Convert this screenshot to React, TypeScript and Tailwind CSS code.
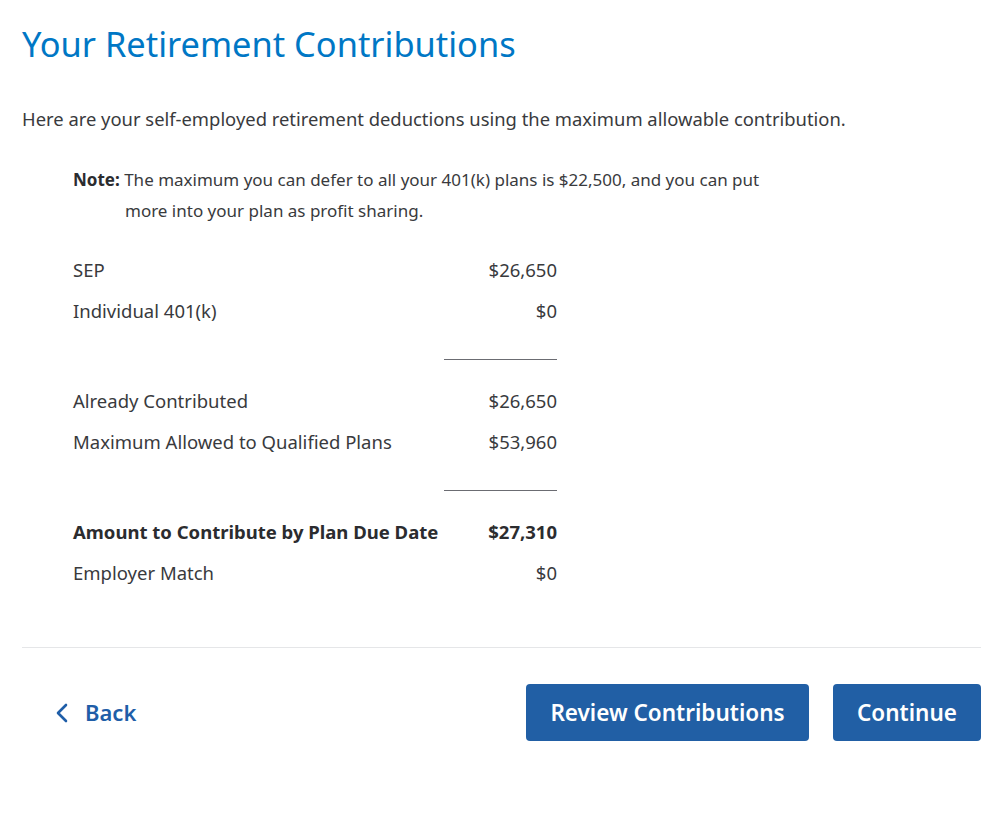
const rows1 = [
  { label: 'SEP', value: '$26,650' },
  { label: 'Individual 401(k)', value: '$0' },
];
const rows2 = [
  { label: 'Already Contributed', value: '$26,650' },
  { label: 'Maximum Allowed to Qualified Plans', value: '$53,960' },
];

function Row({ label, value, bold }: { label: string; value: string; bold?: boolean }) {
  return (
    <div className={`flex h-[41px] items-center justify-between text-[18.5px] ${bold ? 'font-bold text-[#2b2c2f]' : 'text-[#393a3d]'}`}>
      <span>{label}</span>
      <span>{value}</span>
    </div>
  );
}

function Divider() {
  return (
    <div className="mt-[28px] mb-[20px] flex justify-end">
      <div className="h-px w-[113px] bg-[#6b6c72]" />
    </div>
  );
}

export default function App() {
  return (
    <div className="min-h-screen bg-white text-[#393a3d]" style={{ fontFamily: '"Noto Sans", sans-serif' }}>
      <div className="pl-[22px] pr-[18px] pt-[24px]">
        <h1 className="text-[34.4px] leading-[40px] text-[#0077c5]">Your Retirement Contributions</h1>

        <p className="mt-[42px] text-[18.4px] leading-[26px]">
          Here are your self-employed retirement deductions using the maximum allowable contribution.
        </p>

        <div className="mt-[32px] pl-[51px] pr-[150px] text-[17px] leading-[31px]">
          <span className="font-bold text-[#2b2c2f]">Note:</span> The maximum you can defer to all your 401(k) plans is $22,500, and you can put
          <div className="pl-[52px]">more into your plan as profit sharing.</div>
        </div>

        <div className="mt-[23px] ml-[51px] w-[484px]">
          {rows1.map(r => <Row key={r.label} {...r} />)}
          <Divider />
          {rows2.map(r => <Row key={r.label} {...r} />)}
          <Divider />
          <Row label="Amount to Contribute by Plan Due Date" value="$27,310" bold />
          <Row label="Employer Match" value="$0" />
        </div>

        <div className="mt-[54px] h-px bg-[#e5e6e8]" />

        <div className="mt-[36px] flex items-center justify-between">
          <button className="flex items-center gap-[16px] pl-[33px] text-[22px] font-semibold text-[#1f5ea8]">
            <svg width="14" height="20" viewBox="0 0 14 20" fill="none" stroke="currentColor" strokeWidth="2.6" strokeLinecap="round" strokeLinejoin="round">
              <path d="M11 2 L3 10 L11 18" />
            </svg>
            Back
          </button>
          <div className="flex gap-[24px]">
            <button className="h-[57px] w-[283px] rounded-[4px] bg-[#215fa5] text-[22.5px] font-semibold text-white">
              Review Contributions
            </button>
            <button className="h-[57px] w-[148px] rounded-[4px] bg-[#215fa5] text-[22.5px] font-semibold text-white">
              Continue
            </button>
          </div>
        </div>
      </div>
    </div>
  );
}
